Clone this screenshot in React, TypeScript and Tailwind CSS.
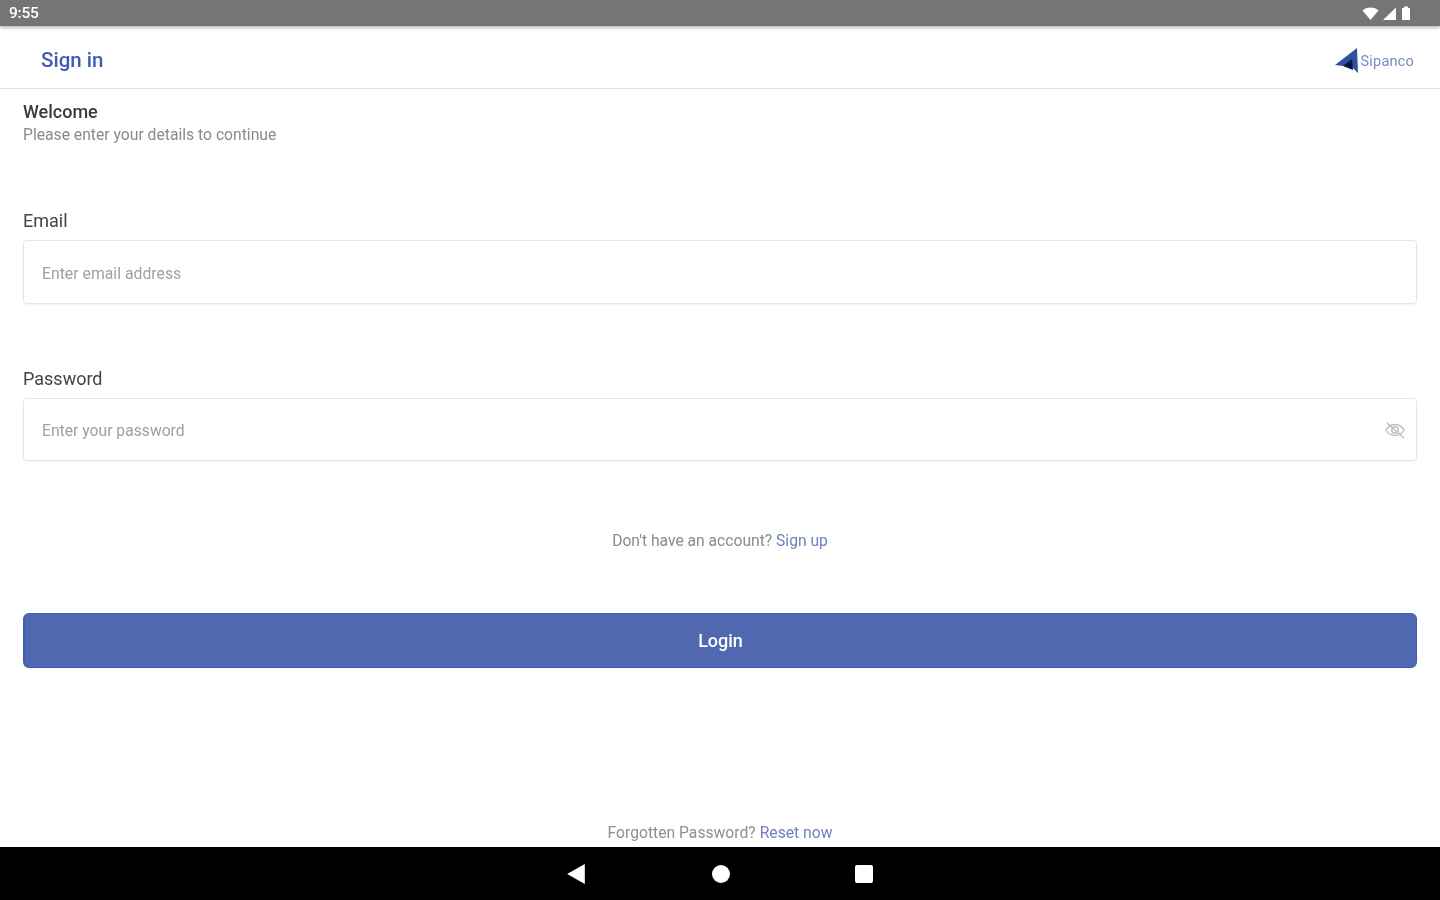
import React from 'react';

const StatusBar = () => (
  <div className="h-[26px] shrink-0 bg-[#757575] flex items-center justify-between pl-[9px] pr-[29px] shadow-[0_2px_3px_rgba(0,0,0,0.25)] relative">
    <span className="text-[15.500px] font-medium text-white tracking-[-0.2px] pt-[2px]">9:55</span>
    <div className="flex items-center gap-[3px]">
      <svg width="17" height="13" viewBox="0 0 16 13" fill="#fff">
        <path d="M0 3.5C2 1.4 4.8 0.5 8 0.5s6 .9 8 3L8 13z" />
      </svg>
      <svg width="14" height="13" viewBox="0 0 14 13" fill="#fff">
        <path d="M14 0.5V13H1z" />
      </svg>
      <svg width="10" height="14" viewBox="0 0 10 14" fill="#fff" className="ml-[2px]">
        <path d="M3 0.5h4v1.5h2v12H1V2h2z" />
      </svg>
    </div>
  </div>
);

const Logo = () => (
  <div className="flex items-center">
    <svg width="26" height="28" viewBox="0 0 26 28">
      <path d="M0 18L22 1l1 25-6-6z" fill="#2f4f9f" />
      <path d="M8 19l9-7 1 11z" fill="#0b1440" />
    </svg>
    <span className="text-[14.500px] text-[#7b88c4] tracking-[0.2px] pt-[2px]">Sipanco</span>
  </div>
);

const EyeOff = () => (
  <svg width="22" height="22" viewBox="0 0 24 24" fill="none" stroke="#bdbdbd" strokeWidth="1.5">
    <path d="M2 12c2.5-4 6-6 10-6s7.500 2 10 6c-2.500 4-6 6-10 6s-7.500-2-10-6z" />
    <circle cx="12" cy="12" r="3.500" />
    <path d="M3 4l19 17" />
  </svg>
);

const App = () => {
  return (
    <div className="h-[900px] flex flex-col bg-white font-['Roboto',sans-serif] overflow-hidden blur-[0.7px]">
      <StatusBar />

      <header className="h-[63px] shrink-0 flex items-center justify-between pl-[41px] pr-[26px] pt-[6px] border-b border-[#e4e4e4]">
        <h1 className="text-[20.500px] font-medium text-[#3f5bb5]">Sign in</h1>
        <div className="pt-[2px]">
          <Logo />
        </div>
      </header>

      <main className="flex-1 flex flex-col px-[23px] pb-[3px] min-h-0">
        <div className="mt-[11px]">
          <p className="text-[18px] leading-[24px] font-medium text-[#3a3a3a]">Welcome</p>
          <p className="text-[15.700px] leading-[22px] text-[#8a8a8a]">Please enter your details to continue</p>
        </div>

        <label className="mt-[63px] text-[18px] leading-[24px] text-[#444]">Email</label>
        <div className="mt-[7px] h-[64px] border border-[#e6e6e6] rounded-[4px] flex items-center px-[18px] pt-[3px] shadow-[0_1px_2px_rgba(0,0,0,0.05)]">
          <span className="text-[15.800px] text-[#a0a0a0]">Enter email address</span>
        </div>

        <label className="mt-[63px] text-[18px] leading-[24px] text-[#444]">Password</label>
        <div className="mt-[7px] h-[63px] border border-[#e6e6e6] rounded-[4px] flex items-center justify-between pl-[18px] pr-[10px] shadow-[0_1px_2px_rgba(0,0,0,0.05)]">
          <span className="text-[15.700px] text-[#a0a0a0] pt-[3px]">Enter your password</span>
          <EyeOff />
        </div>

        <p className="mt-[69px] text-center text-[15.650px] leading-[22px] text-[#8a8a8a]">
          Don't have an account? <span className="text-[#6f7fc0]">Sign up</span>
        </p>

        <button className="mt-[61px] h-[55px] rounded-[6px] bg-[#4f68b0] text-white text-[18px] font-medium border border-l-2 border-[#3f5cab]">
          Login
        </button>

        <p className="mt-auto text-center text-[15.700px] leading-[22px] text-[#8f8f8f]">
          Forgotten Password? <span className="text-[#6f7fc0]">Reset now</span>
        </p>
      </main>

      <nav className="h-[53px] shrink-0 bg-black flex items-center justify-center gap-[125px]">
        <svg width="22" height="22" viewBox="0 0 20 20" fill="#fff" className="-ml-[3px]">
          <path d="M18 1v18L2 10z" />
        </svg>
        <div className="w-[18px] h-[18px] rounded-full bg-white" />
        <div className="w-[18px] h-[18px] rounded-[2px] bg-white" />
      </nav>
    </div>
  );
};

export default App;
